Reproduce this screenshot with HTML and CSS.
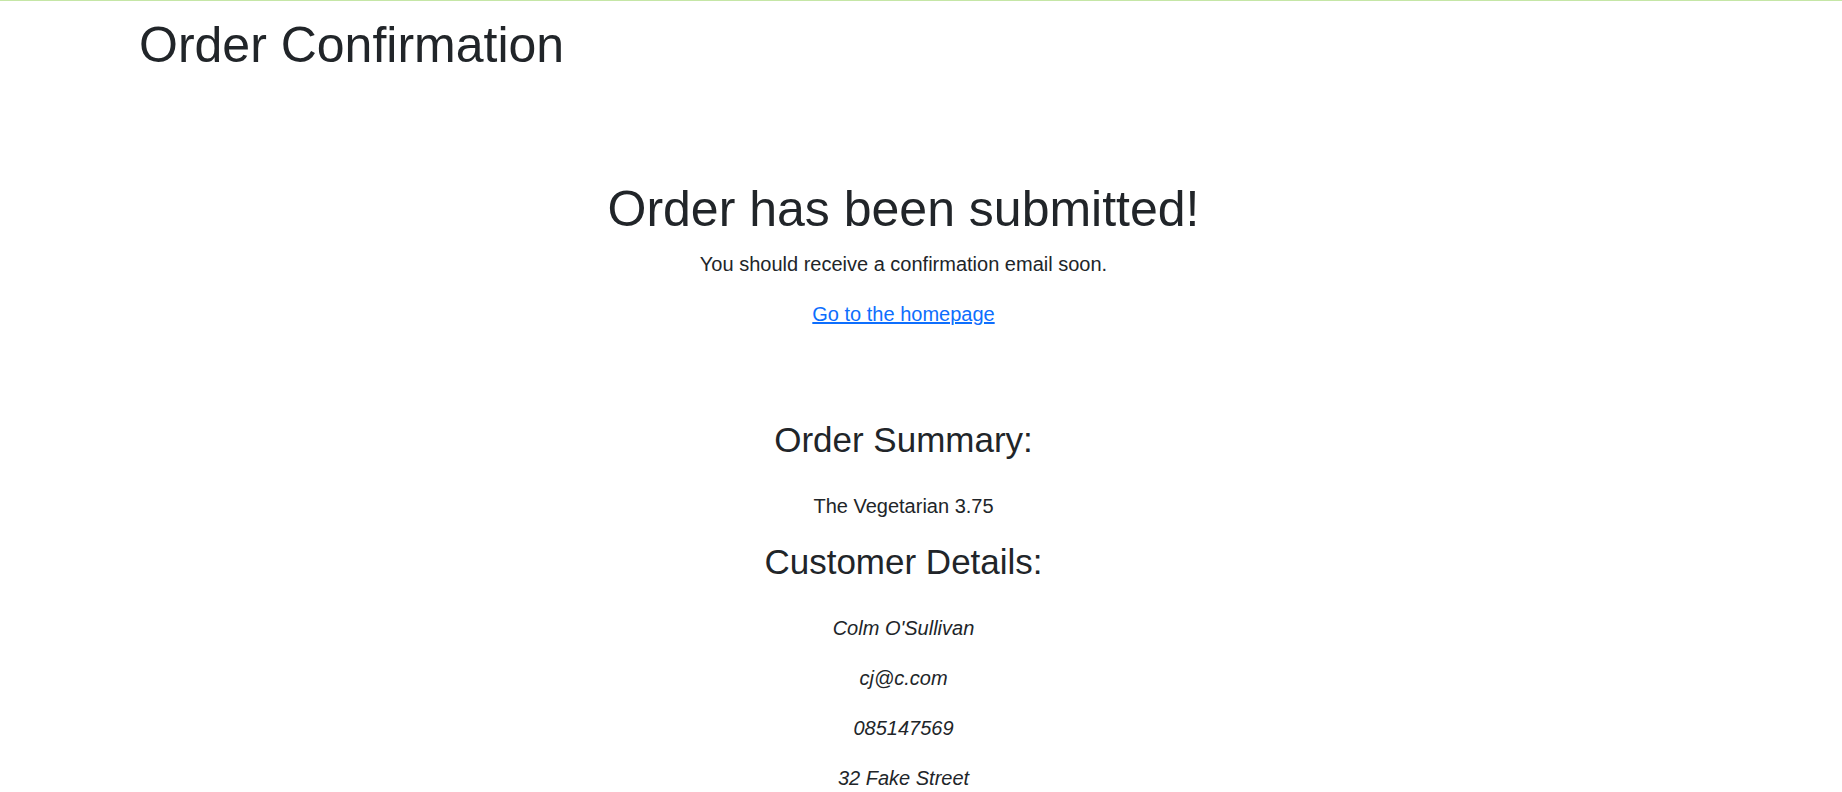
FILE: index.html
```html
<!DOCTYPE html>
<html lang="en">
<head>
<meta charset="utf-8">
<title>Order Confirmation</title>
<link rel="stylesheet" href="styles.css">
</head>
<body>
<div class="topbar"></div>
<div class="page">
  <h1 class="page-title">Order Confirmation</h1>
  <main class="content">
    <h1 class="headline">Order has been submitted!</h1>
    <p>You should receive a confirmation email soon.</p>
    <p><a href="#">Go to the homepage</a></p>
    <section class="summary">
      <h3 class="section-title">Order Summary:</h3>
      <p>The Vegetarian 3.75</p>
      <h3 class="section-title">Customer Details:</h3>
      <p class="detail">Colm O'Sullivan</p>
      <p class="detail">cj@c.com</p>
      <p class="detail">085147569</p>
      <p class="detail">32 Fake Street</p>
    </section>
  </main>
</div>
</body>
</html>
```
FILE: styles.css
```css
html, body {
  margin: 0;
  padding: 0;
  background: #fff;
}
body {
  font-family: "Liberation Sans", Arial, sans-serif;
  font-size: 20px;
  line-height: 1.5;
  color: #212529;
}
.topbar {
  height: 1px;
  background: #c5e6a6;
}
.page {
  padding: 0 174px 0 139px;
}
h1, h3, p {
  margin-top: 0;
}
.page-title {
  font-size: 50px;
  font-weight: 400;
  line-height: 1.2;
  margin: 14px 0 0;
}
.content {
  text-align: center;
  padding-top: 104px;
}
.headline {
  font-size: 50px;
  font-weight: 400;
  line-height: 1.2;
  margin-bottom: 10px;
}
p {
  margin-bottom: 20px;
}
a {
  color: #0d6efd;
  text-decoration: underline;
}
.summary {
  padding-top: 70px;
}
.section-title {
  font-size: 35px;
  font-weight: 400;
  line-height: 1.2;
  margin-bottom: 30px;
}
.detail {
  font-style: italic;
}
```
